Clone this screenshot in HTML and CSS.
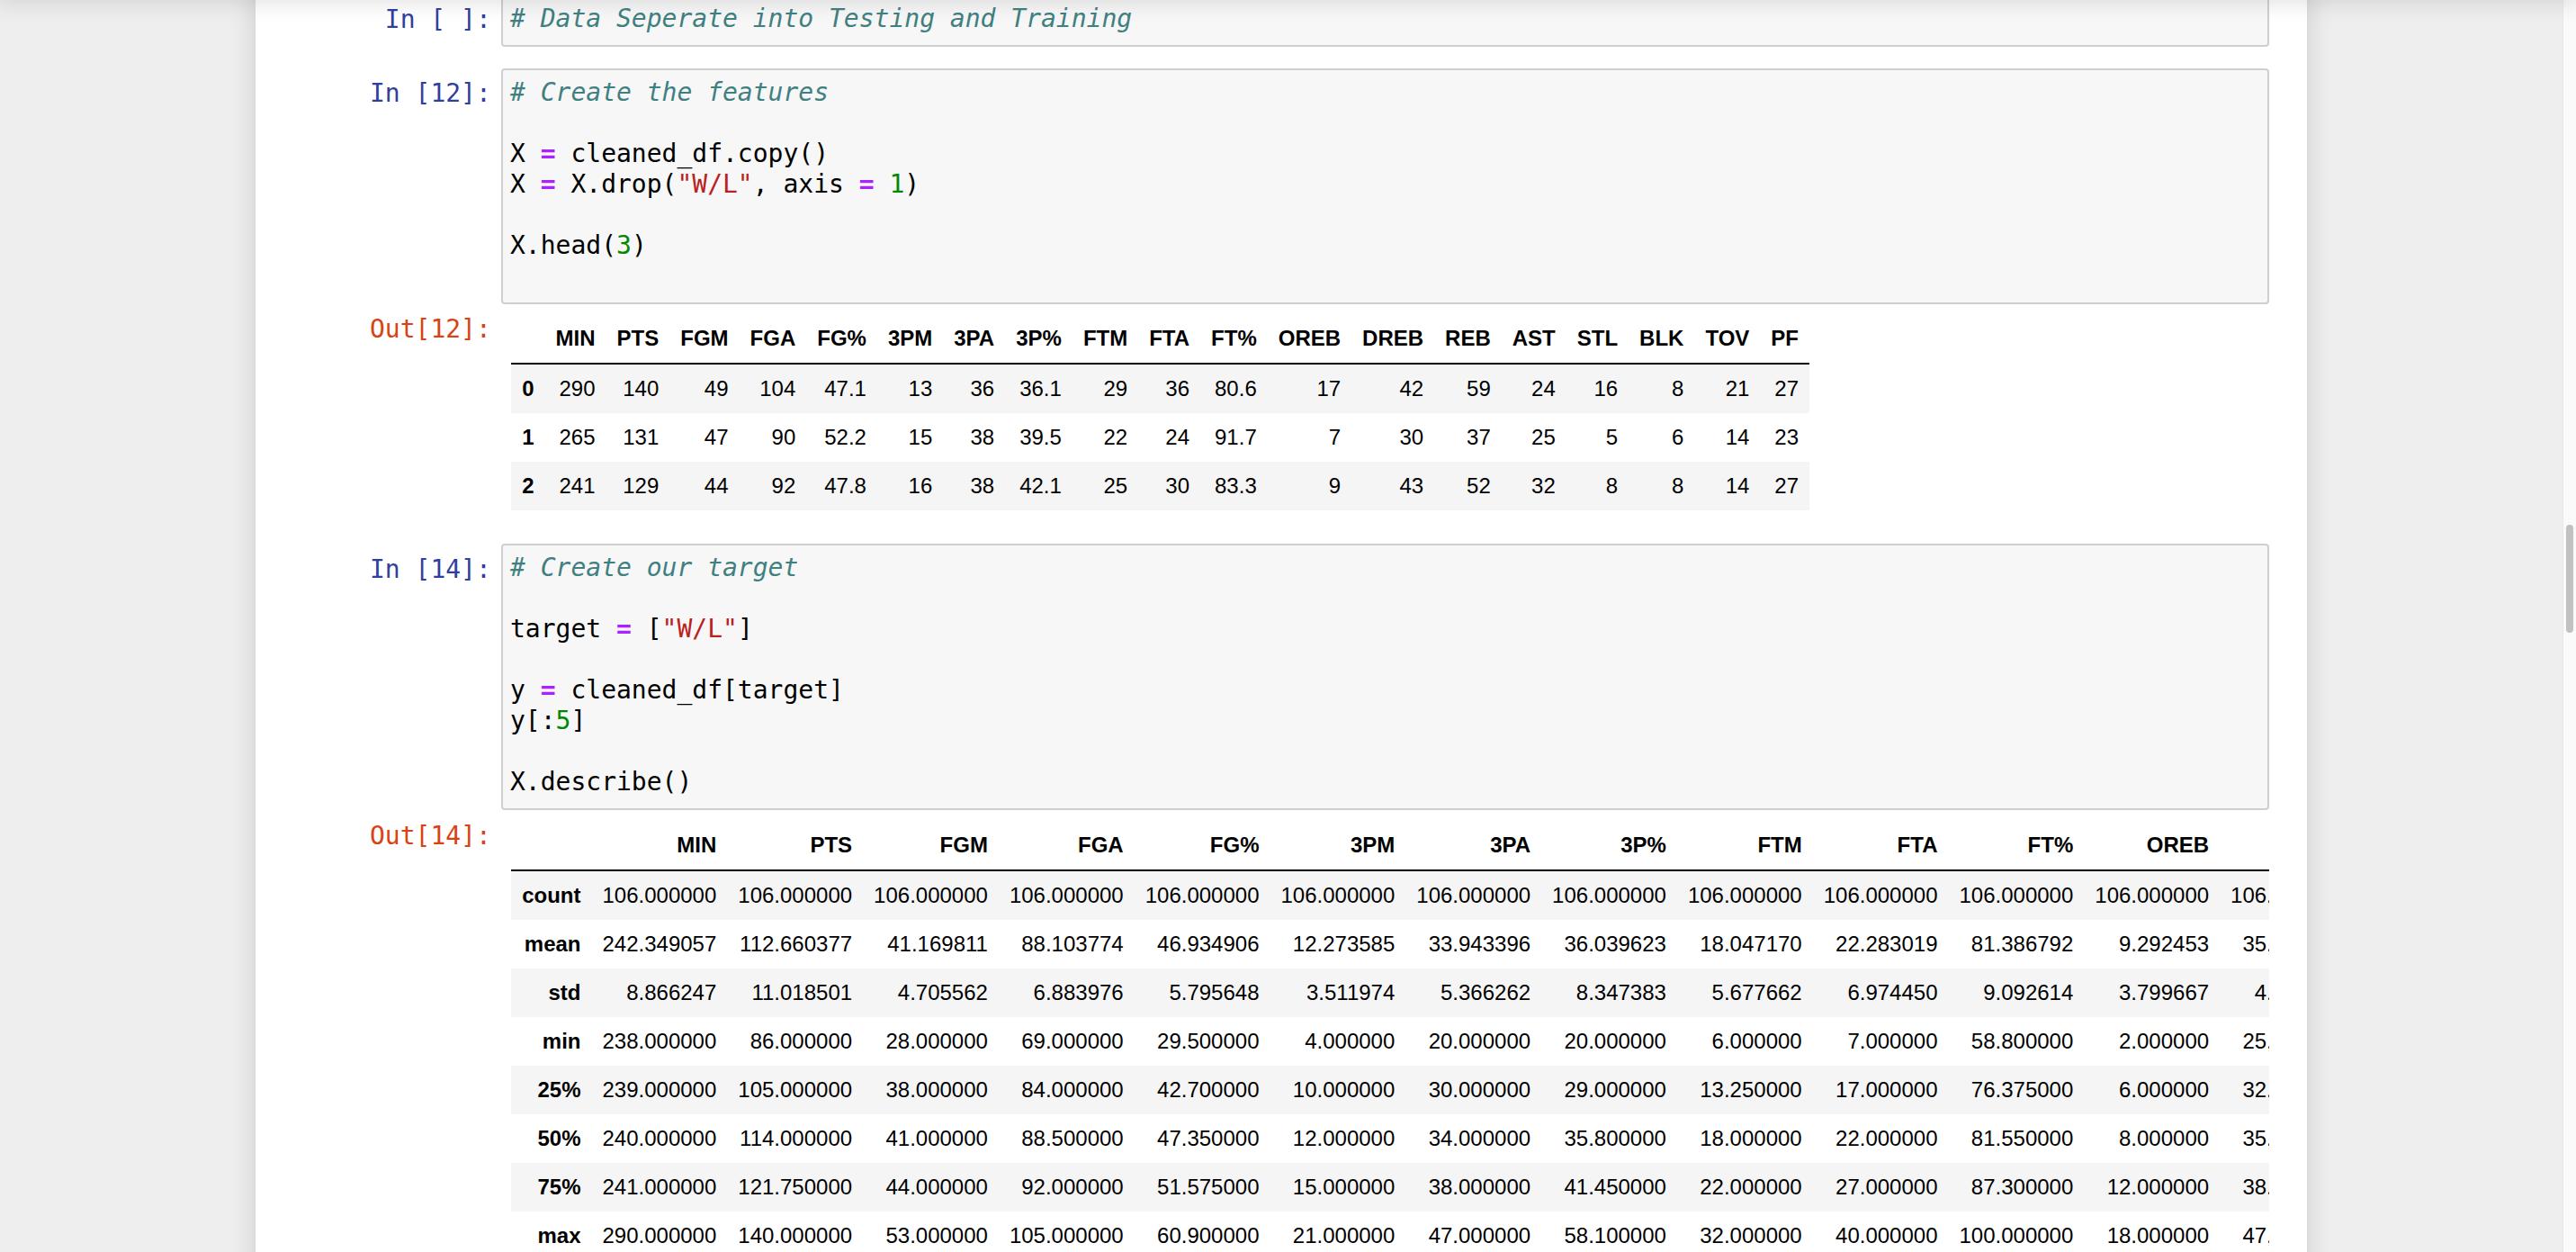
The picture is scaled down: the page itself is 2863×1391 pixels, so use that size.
FILE: index.html
```html
<!DOCTYPE html>
<html lang="en">
<head>
<meta charset="utf-8">
<title>Notebook</title>
<link rel="stylesheet" href="styles.css">
</head>
<body>
<div class="header-shadow"></div>
<div class="notebook">

  <div class="cell">
    <div class="row">
      <div class="prompt in-prompt">In&nbsp;[&nbsp;]:</div>
      <div class="input-area">
        <div class="line"><span class="c">#&nbsp;Data&nbsp;Seperate&nbsp;into&nbsp;Testing&nbsp;and&nbsp;Training</span></div>
      </div>
    </div>
  </div>

  <div class="cell">
    <div class="row">
      <div class="prompt in-prompt">In&nbsp;[12]:</div>
      <div class="input-area">
        <div class="line"><span class="c"># Create the features</span></div>
        <div class="line"></div>
        <div class="line">X <span class="o">=</span> cleaned_df.copy()</div>
        <div class="line">X <span class="o">=</span> X.drop(<span class="s">"W/L"</span>, axis <span class="o">=</span> <span class="n">1</span>)</div>
        <div class="line"></div>
        <div class="line">X.head(<span class="n">3</span>)</div>
        <div class="line"></div>
      </div>
    </div>
    <div class="row">
      <div class="prompt out-prompt">Out[12]:</div>
      <div class="output-sub">
        <table class="df">
          <thead>
            <tr><th></th><th>MIN</th><th>PTS</th><th>FGM</th><th>FGA</th><th>FG%</th><th>3PM</th><th>3PA</th><th>3P%</th><th>FTM</th><th>FTA</th><th>FT%</th><th>OREB</th><th>DREB</th><th>REB</th><th>AST</th><th>STL</th><th>BLK</th><th>TOV</th><th>PF</th></tr>
          </thead>
          <tbody>
            <tr><th>0</th><td>290</td><td>140</td><td>49</td><td>104</td><td>47.1</td><td>13</td><td>36</td><td>36.1</td><td>29</td><td>36</td><td>80.6</td><td>17</td><td>42</td><td>59</td><td>24</td><td>16</td><td>8</td><td>21</td><td>27</td></tr>
            <tr><th>1</th><td>265</td><td>131</td><td>47</td><td>90</td><td>52.2</td><td>15</td><td>38</td><td>39.5</td><td>22</td><td>24</td><td>91.7</td><td>7</td><td>30</td><td>37</td><td>25</td><td>5</td><td>6</td><td>14</td><td>23</td></tr>
            <tr><th>2</th><td>241</td><td>129</td><td>44</td><td>92</td><td>47.8</td><td>16</td><td>38</td><td>42.1</td><td>25</td><td>30</td><td>83.3</td><td>9</td><td>43</td><td>52</td><td>32</td><td>8</td><td>8</td><td>14</td><td>27</td></tr>
          </tbody>
        </table>
      </div>
    </div>
  </div>

  <div class="cell">
    <div class="row">
      <div class="prompt in-prompt">In&nbsp;[14]:</div>
      <div class="input-area">
        <div class="line"><span class="c"># Create our target</span></div>
        <div class="line"></div>
        <div class="line">target <span class="o">=</span> [<span class="s">"W/L"</span>]</div>
        <div class="line"></div>
        <div class="line">y <span class="o">=</span> cleaned_df[target]</div>
        <div class="line">y[:<span class="n">5</span>]</div>
        <div class="line"></div>
        <div class="line">X.describe()</div>
      </div>
    </div>
    <div class="row">
      <div class="prompt out-prompt">Out[14]:</div>
      <div class="output-sub">
        <table class="df">
          <thead>
            <tr><th></th><th>MIN</th><th>PTS</th><th>FGM</th><th>FGA</th><th>FG%</th><th>3PM</th><th>3PA</th><th>3P%</th><th>FTM</th><th>FTA</th><th>FT%</th><th>OREB</th><th>DREB</th><th>REB</th><th>AST</th><th>STL</th><th>BLK</th><th>TOV</th><th>PF</th></tr>
          </thead>
          <tbody>
            <tr><th>count</th><td>106.000000</td><td>106.000000</td><td>106.000000</td><td>106.000000</td><td>106.000000</td><td>106.000000</td><td>106.000000</td><td>106.000000</td><td>106.000000</td><td>106.000000</td><td>106.000000</td><td>106.000000</td><td>106.000000</td><td>106.000000</td><td>106.000000</td><td>106.000000</td><td>106.000000</td><td>106.000000</td><td>106.000000</td></tr>
            <tr><th>mean</th><td>242.349057</td><td>112.660377</td><td>41.169811</td><td>88.103774</td><td>46.934906</td><td>12.273585</td><td>33.943396</td><td>36.039623</td><td>18.047170</td><td>22.283019</td><td>81.386792</td><td>9.292453</td><td>35.358491</td><td>44.650943</td><td>25.924528</td><td>7.830189</td><td>5.028302</td><td>13.990566</td><td>21.066038</td></tr>
            <tr><th>std</th><td>8.866247</td><td>11.018501</td><td>4.705562</td><td>6.883976</td><td>5.795648</td><td>3.511974</td><td>5.366262</td><td>8.347383</td><td>5.677662</td><td>6.974450</td><td>9.092614</td><td>3.799667</td><td>4.694217</td><td>6.216337</td><td>4.809528</td><td>2.784210</td><td>2.320563</td><td>3.851205</td><td>4.127340</td></tr>
            <tr><th>min</th><td>238.000000</td><td>86.000000</td><td>28.000000</td><td>69.000000</td><td>29.500000</td><td>4.000000</td><td>20.000000</td><td>20.000000</td><td>6.000000</td><td>7.000000</td><td>58.800000</td><td>2.000000</td><td>25.000000</td><td>30.000000</td><td>15.000000</td><td>2.000000</td><td>1.000000</td><td>6.000000</td><td>12.000000</td></tr>
            <tr><th>25%</th><td>239.000000</td><td>105.000000</td><td>38.000000</td><td>84.000000</td><td>42.700000</td><td>10.000000</td><td>30.000000</td><td>29.000000</td><td>13.250000</td><td>17.000000</td><td>76.375000</td><td>6.000000</td><td>32.000000</td><td>40.000000</td><td>23.000000</td><td>6.000000</td><td>3.000000</td><td>11.000000</td><td>18.000000</td></tr>
            <tr><th>50%</th><td>240.000000</td><td>114.000000</td><td>41.000000</td><td>88.500000</td><td>47.350000</td><td>12.000000</td><td>34.000000</td><td>35.800000</td><td>18.000000</td><td>22.000000</td><td>81.550000</td><td>8.000000</td><td>35.000000</td><td>44.000000</td><td>26.000000</td><td>8.000000</td><td>5.000000</td><td>14.000000</td><td>21.000000</td></tr>
            <tr><th>75%</th><td>241.000000</td><td>121.750000</td><td>44.000000</td><td>92.000000</td><td>51.575000</td><td>15.000000</td><td>38.000000</td><td>41.450000</td><td>22.000000</td><td>27.000000</td><td>87.300000</td><td>12.000000</td><td>38.000000</td><td>49.000000</td><td>29.000000</td><td>10.000000</td><td>6.750000</td><td>16.000000</td><td>24.000000</td></tr>
            <tr><th>max</th><td>290.000000</td><td>140.000000</td><td>53.000000</td><td>105.000000</td><td>60.900000</td><td>21.000000</td><td>47.000000</td><td>58.100000</td><td>32.000000</td><td>40.000000</td><td>100.000000</td><td>18.000000</td><td>47.000000</td><td>60.000000</td><td>37.000000</td><td>16.000000</td><td>12.000000</td><td>25.000000</td><td>31.000000</td></tr>
          </tbody>
        </table>
      </div>
    </div>
  </div>

</div>
<div class="scrollbar"><div class="thumb"></div></div>
</body>
</html>
```
FILE: styles.css
```css
html, body {
  margin: 0;
  height: 100%;
  overflow: hidden;
}

body {
  background: #eeeeee;
  padding-right: 15px;
  box-sizing: border-box;
  font-family: "Liberation Sans", Arial, Helvetica, sans-serif;
  color: #000;
}

.header-shadow {
  position: fixed;
  left: 0;
  right: 0;
  top: -20px;
  height: 20px;
  background: #fff;
  box-shadow: 0 0 24px 2px rgba(87, 87, 87, 0.2);
  z-index: 5;
}

.notebook {
  width: 2280px;
  margin: -18px auto 0;
  padding: 0 30px 200px;
  box-sizing: border-box;
  background: #fff;
  box-shadow: 0 0 24px 2px rgba(87, 87, 87, 0.2);
}

.cell {
  padding: 10px;
  border: 2px solid transparent;
}

.row {
  display: flex;
  align-items: flex-start;
}

.prompt {
  flex: none;
  width: 231px;
  padding: 11.2px;
  box-sizing: border-box;
  font-family: "DejaVu Sans Mono", monospace;
  font-size: 28px;
  line-height: 34px;
  text-align: right;
  white-space: nowrap;
}

.in-prompt {
  color: #303F9F;
}

.out-prompt {
  color: #D84315;
}

.input-area {
  flex: 1;
  min-width: 0;
  border: 2px solid #cfcfcf;
  border-radius: 4px;
  background: #f7f7f7;
  padding: 8px 0 12px;
}

.line {
  height: 34px;
  padding: 0 8px;
  font-family: "DejaVu Sans Mono", monospace;
  font-size: 28px;
  line-height: 34px;
  white-space: pre;
  color: #000;
}

.c {
  color: #408080;
  font-style: italic;
}

.o {
  color: #AA22FF;
  font-weight: bold;
}

.s {
  color: #BA2121;
}

.n {
  color: #008800;
}

.output-sub {
  flex: 1;
  min-width: 0;
  padding: 11.2px 11.2px 13.2px;
  overflow-x: auto;
  scrollbar-width: none;
}

.df {
  border-collapse: collapse;
  border-spacing: 0;
  font-size: 24px;
  color: #000;
}

.df thead {
  border-bottom: 2px solid #000;
}

.df th,
.df td {
  padding: 12px;
  text-align: right;
  vertical-align: middle;
  line-height: 30px;
  white-space: nowrap;
}

.df th {
  font-weight: bold;
}

.df tbody tr:nth-child(odd) {
  background: #f5f5f5;
}

.scrollbar {
  position: fixed;
  top: 0;
  right: 0;
  bottom: 0;
  width: 14px;
  background: #fafafa;
  border-left: 1px solid #e8e8e8;
}

.thumb {
  margin: 583px 0 0 3px;
  width: 8px;
  height: 120px;
  border-radius: 4px;
  background: #c1c1c1;
}
```
